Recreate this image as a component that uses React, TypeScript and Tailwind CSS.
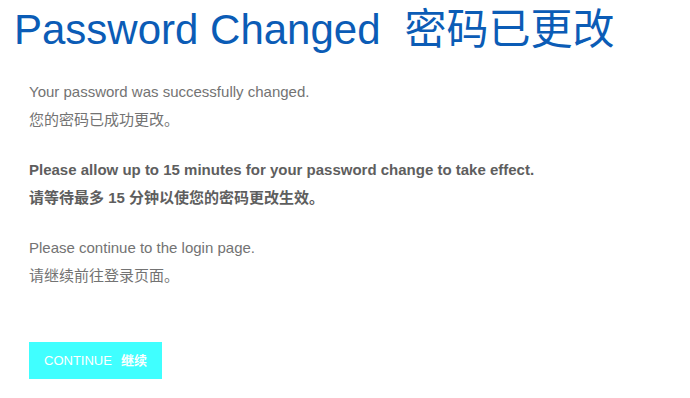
const App = () => {
  return (
    <div className="w-[690px] h-[398px] bg-white overflow-hidden font-['Liberation_Sans','Noto_Sans_CJK_SC',sans-serif]">
      <h1 className="pl-[14px] pt-[6px] text-[42px] leading-[48px] text-[#0b5cb6] font-normal">
        Password Changed<span className="ml-[24px]">密码已更改</span>
      </h1>

      <div className="pl-[29px] pt-[24px] text-[15px] leading-[28px] text-[#737373]">
        <p>Your password was successfully changed.</p>
        <p>您的密码已成功更改。</p>

        <p className="mt-[22px] font-bold text-[#5e5e5e]">Please allow up to 15 minutes for your password change to take effect.</p>
        <p className="font-bold text-[#5e5e5e]">请等待最多 15 分钟以使您的密码更改生效。</p>

        <p className="mt-[22px]">Please continue to the login page.</p>
        <p>请继续前往登录页面。</p>

        <button className="mt-[52px] h-[37px] px-[15px] bg-[#40ffff] text-white text-[13px] leading-[37px]">
          CONTINUE<span className="ml-[9px] font-bold">继续</span>
        </button>
      </div>
    </div>
  );
};

export default App;
